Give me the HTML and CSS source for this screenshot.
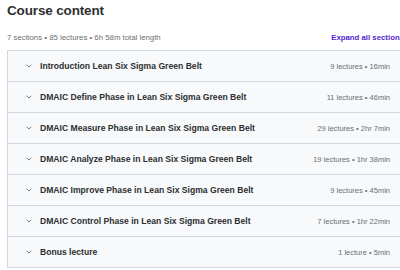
FILE: index.html
```html
<!DOCTYPE html>
<html>
<head>
<meta charset="utf-8">
<link rel="stylesheet" href="styles.css">
</head>
<body>
<div class="page">
  <h2 class="title">Course content</h2>
  <div class="summary">
    <span class="stats">7 sections • 85 lectures • 6h 58m total length</span>
    <span class="expand">Expand all sections</span>
  </div>
  <div class="sections">
    <div class="row"><span class="chev"><svg width="6" height="4" viewBox="0 0 6 4"><path d="M0.7 0.8 L3 3 L5.3 0.8" fill="none" stroke="#6a6f73" stroke-width="0.9"/></svg></span><span class="name">Introduction Lean Six Sigma Green Belt</span><span class="meta">9 lectures • 16min</span></div>
    <div class="row"><span class="chev"><svg width="6" height="4" viewBox="0 0 6 4"><path d="M0.7 0.8 L3 3 L5.3 0.8" fill="none" stroke="#6a6f73" stroke-width="0.9"/></svg></span><span class="name">DMAIC Define Phase in Lean Six Sigma Green Belt</span><span class="meta">11 lectures • 46min</span></div>
    <div class="row"><span class="chev"><svg width="6" height="4" viewBox="0 0 6 4"><path d="M0.7 0.8 L3 3 L5.3 0.8" fill="none" stroke="#6a6f73" stroke-width="0.9"/></svg></span><span class="name">DMAIC Measure Phase in Lean Six Sigma Green Belt</span><span class="meta">29 lectures • 2hr 7min</span></div>
    <div class="row"><span class="chev"><svg width="6" height="4" viewBox="0 0 6 4"><path d="M0.7 0.8 L3 3 L5.3 0.8" fill="none" stroke="#6a6f73" stroke-width="0.9"/></svg></span><span class="name">DMAIC Analyze Phase in Lean Six Sigma Green Belt</span><span class="meta">19 lectures • 1hr 38min</span></div>
    <div class="row"><span class="chev"><svg width="6" height="4" viewBox="0 0 6 4"><path d="M0.7 0.8 L3 3 L5.3 0.8" fill="none" stroke="#6a6f73" stroke-width="0.9"/></svg></span><span class="name">DMAIC Improve Phase in Lean Six Sigma Green Belt</span><span class="meta">9 lectures • 45min</span></div>
    <div class="row"><span class="chev"><svg width="6" height="4" viewBox="0 0 6 4"><path d="M0.7 0.8 L3 3 L5.3 0.8" fill="none" stroke="#6a6f73" stroke-width="0.9"/></svg></span><span class="name">DMAIC Control Phase in Lean Six Sigma Green Belt</span><span class="meta">7 lectures • 1hr 22min</span></div>
    <div class="row"><span class="chev"><svg width="6" height="4" viewBox="0 0 6 4"><path d="M0.7 0.8 L3 3 L5.3 0.8" fill="none" stroke="#6a6f73" stroke-width="0.9"/></svg></span><span class="name">Bonus lecture</span><span class="meta">1 lecture • 5min</span></div>
  </div>
</div>
</body>
</html>
```

FILE: styles.css
```css
html, body {
  margin: 0;
  padding: 0;
  background: #ffffff;
  overflow: hidden;
}
body {
  font-family: "Liberation Sans", Arial, sans-serif;
  color: #2d2f31;
}
.page {
  width: 397px;
  padding: 3px 0 0 7px;
}
.title {
  margin: 0;
  font-size: 13.5px;
  line-height: 16px;
  font-weight: 700;
  letter-spacing: -0.15px;
}
.summary {
  display: flex;
  justify-content: space-between;
  align-items: center;
  margin-top: 12px;
  height: 12px;
  margin-bottom: 7px;
}
.stats {
  font-size: 7.8px;
  color: #6a6f73;
}
.expand {
  font-size: 7.8px;
  font-weight: 700;
  color: #5624d0;
}
.sections {
  border: 1px solid #d1d7dc;
  border-right: none;
}
.row {
  display: flex;
  align-items: center;
  height: 30px;
  background: #f7f9fa;
  padding: 0 14px 0 18px;
  border-bottom: 1px solid #d1d7dc;
}
.row:last-child {
  border-bottom: none;
}
.chev {
  width: 14px;
  display: flex;
  align-items: center;
}
.name {
  flex: 1;
  font-size: 8.6px;
  font-weight: 700;
}
.meta {
  font-size: 7.5px;
  color: #6a6f73;
}
```
